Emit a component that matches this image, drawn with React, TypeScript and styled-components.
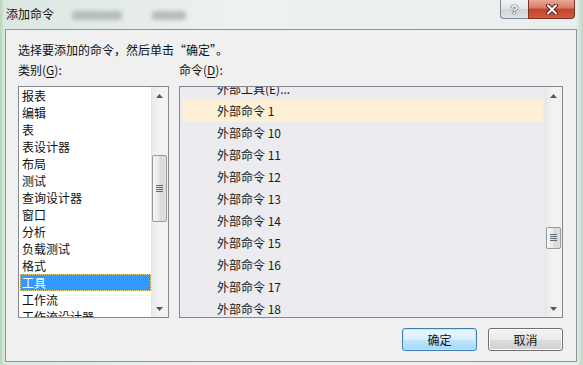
import React from "react";
import styled, { createGlobalStyle } from "styled-components";

const categories = [
  "报表",
  "编辑",
  "表",
  "表设计器",
  "布局",
  "测试",
  "查询设计器",
  "窗口",
  "分析",
  "负载测试",
  "格式",
  "工具",
  "工作流",
  "工作流设计器",
];

const commands = [
  "外部工具(E)...",
  "外部命令 1",
  "外部命令 10",
  "外部命令 11",
  "外部命令 12",
  "外部命令 13",
  "外部命令 14",
  "外部命令 15",
  "外部命令 16",
  "外部命令 17",
  "外部命令 18",
];

const GlobalStyle = createGlobalStyle`
  html, body {
    margin: 0;
    padding: 0;
    background: #e2e9e6;
  }
  body {
    font-family: "Noto Sans CJK SC", "Noto Sans", "Liberation Sans", sans-serif;
    color: #000;
  }
`;

const Window = styled.div`
  width: 583px;
  height: 365px;
  box-sizing: border-box;
  display: flex;
  flex-direction: column;
  padding: 0 6px 3px 5px;
  overflow: hidden;
  background: linear-gradient(
    to right,
    #b3d5ba 0,
    #dbe7e0 4px,
    #eef1f2 40%,
    #e9eeee calc(100% - 7px),
    #bcd8c3 100%
  );
`;

const TitleBar = styled.div`
  height: 29px;
  display: flex;
  align-items: flex-start;
  flex-shrink: 0;
`;

const Title = styled.div`
  padding: 6px 0 0 1px;
  font-size: 12px;
  line-height: 16px;
  color: #111;
`;

// blurred glimpse of the window behind the glass title bar
const Ghost = styled.div<{ $w: number; $ml: number }>`
  width: ${(p) => p.$w}px;
  height: 9px;
  margin: 11px 0 0 ${(p) => p.$ml}px;
  background: #a4acb0;
  border-radius: 3px;
  filter: blur(2px);
  opacity: 0.75;
`;

const HelpButton = styled.div`
  margin-left: auto;
  width: 28px;
  height: 19px;
  box-sizing: border-box;
  border: 1px solid #7b8792;
  border-top: none;
  border-right: none;
  border-radius: 0 0 0 4px;
  background: linear-gradient(
    to bottom,
    #f1f4f6 0,
    #dfe5e9 50%,
    #cbd4da 51%,
    #dbe2e6 100%
  );
  display: flex;
  align-items: center;
  justify-content: center;
  font-family: "Liberation Sans", sans-serif;
  font-weight: bold;
  font-size: 13px;
  color: #fff;
  text-shadow: 0 0 1px #34414c, 0 0 1px #34414c, 0 0 1px #34414c;
`;

const CloseButton = styled.div`
  width: 47px;
  height: 19px;
  margin-right: 2px;
  box-sizing: border-box;
  border: 1px solid #7a3426;
  border-top: none;
  border-radius: 0 0 4px 0;
  background: linear-gradient(
    to bottom,
    #eaa898 0,
    #d87a64 45%,
    #c4432a 50%,
    #d45a3f 100%
  );
  display: flex;
  align-items: center;
  justify-content: center;
`;

const Client = styled.div`
  flex: 1;
  border: 1px solid #8c959a;
  background: #f0f0f0;
  padding: 12px 13px 0 12px;
  display: flex;
  flex-direction: column;
`;

const Text = styled.div`
  font-size: 12px;
  line-height: 16px;
  color: #111;
`;

const Columns = styled.div`
  display: grid;
  grid-template-columns: 151px 1fr;
  column-gap: 10px;
  margin-top: 4px;
`;

const Column = styled.div`
  display: flex;
  flex-direction: column;
`;

const Label = styled(Text)`
  margin-bottom: 8px;
  & u {
    text-decoration: underline;
    text-underline-offset: 2px;
  }
`;

const ListBox = styled.div<{ $bg: string }>`
  height: 232px;
  box-sizing: border-box;
  border: 1px solid #828790;
  background: ${(p) => p.$bg};
  display: flex;
`;

const ListBody = styled.div`
  flex: 1;
  overflow: hidden;
`;

const ListInner = styled.div<{ $offset: number }>`
  margin-top: ${(p) => p.$offset}px;
`;

const CategoryItem = styled.div<{ $selected?: boolean }>`
  height: 17px;
  box-sizing: border-box;
  margin-left: 1px;
  padding-left: 2px;
  font-size: 12px;
  line-height: 17px;
  white-space: nowrap;
  color: ${(p) => (p.$selected ? "#fff" : "#111")};
  background: ${(p) => (p.$selected ? "#3399ff" : "transparent")};
  outline: ${(p) => (p.$selected ? "1px dotted #e6dc8a" : "none")};
  outline-offset: -1px;
`;

const CommandRow = styled.div<{ $hot?: boolean }>`
  height: 22px;
  margin: 0 2px 0 3px;
  padding-left: 34px;
  font-size: 12px;
  line-height: 22px;
  white-space: nowrap;
  color: #1a1a1a;
  background: ${(p) => (p.$hot ? "#fdf0d5" : "transparent")};
`;

const ScrollBar = styled.div`
  width: 17px;
  flex-shrink: 0;
  display: flex;
  flex-direction: column;
  background: linear-gradient(
    to right,
    #e2e2e2 0,
    #ececec 2px,
    #f3f3f3 60%,
    #f1f1f1 100%
  );
`;

const ArrowButton = styled.div`
  height: 17px;
  display: flex;
  align-items: center;
  justify-content: center;
`;

const Track = styled.div`
  flex: 1;
`;

const Thumb = styled.div<{ $top: number; $h: number }>`
  margin: ${(p) => p.$top}px 1px 0 1px;
  height: ${(p) => p.$h}px;
  box-sizing: border-box;
  border: 1px solid #9b9b9b;
  border-radius: 2px;
  background: linear-gradient(
    to right,
    #f5f5f5 0,
    #e9e9e9 45%,
    #d9d9d9 55%,
    #dedede 100%
  );
  display: flex;
  align-items: center;
  justify-content: center;
`;

const ButtonRow = styled.div`
  display: flex;
  justify-content: flex-end;
  gap: 11px;
  margin-top: 10px;
`;

const Button = styled.div<{ $default?: boolean }>`
  width: 75px;
  height: 23px;
  box-sizing: border-box;
  border: 1px solid ${(p) => (p.$default ? "#3c7fb1" : "#707070")};
  border-radius: 3px;
  background: ${(p) =>
    p.$default
      ? "linear-gradient(to bottom, #eaf6fd 0, #d9f0fc 50%, #bee6fd 51%, #a7d9f5 100%)"
      : "linear-gradient(to bottom, #f2f2f2 0, #ebebeb 50%, #dddddd 51%, #cfcfcf 100%)"};
  box-shadow: inset 0 0 0 1px ${(p) => (p.$default ? "#c4e5f6" : "#fcfcfc")};
  display: flex;
  align-items: center;
  justify-content: center;
  font-size: 12px;
  color: #111;
`;

const Arrow = ({ up }: { up?: boolean }) => (
  <svg width="7" height="4" viewBox="0 0 7 4">
    <path d={up ? "M0 4 L3.5 0 L7 4 Z" : "M0 0 L3.5 4 L7 0 Z"} fill="#4d5a66" />
  </svg>
);

const Grip = () => (
  <svg width="7" height="8" viewBox="0 0 7 8">
    {[0, 2, 4, 6].map((y) => (
      <rect key={y} x="0" y={y} width="7" height="1" fill="#5e6a74" />
    ))}
  </svg>
);

const CloseGlyph = () => (
  <svg width="12" height="11" viewBox="0 0 12 11">
    <path d="M2 1.5 L10 9.5 M10 1.5 L2 9.5" stroke="#5a2318" strokeWidth="4" strokeLinecap="round" />
    <path d="M2 1.5 L10 9.5 M10 1.5 L2 9.5" stroke="#fff" strokeWidth="2" strokeLinecap="round" />
  </svg>
);

const Scroller = ({ top, h }: { top: number; h: number }) => (
  <ScrollBar>
    <ArrowButton>
      <Arrow up />
    </ArrowButton>
    <Track>
      <Thumb $top={top} $h={h}>
        <Grip />
      </Thumb>
    </Track>
    <ArrowButton>
      <Arrow />
    </ArrowButton>
  </ScrollBar>
);

const App = () => {
  return (
    <Window>
      <GlobalStyle />
      <TitleBar>
        <Title>添加命令</Title>
        <Ghost $w={50} $ml={18} />
        <Ghost $w={34} $ml={30} />
        <HelpButton>?</HelpButton>
        <CloseButton>
          <CloseGlyph />
        </CloseButton>
      </TitleBar>
      <Client>
        <Text>选择要添加的命令，然后单击“确定”。</Text>
        <Columns>
          <Column>
            <Label>
              类别(<u>G</u>):
            </Label>
            <ListBox $bg="#ffffff">
              <ListBody>
                <ListInner $offset={0}>
                  {categories.map((c) => (
                    <CategoryItem key={c} $selected={c === "工具"}>
                      {c}
                    </CategoryItem>
                  ))}
                </ListInner>
              </ListBody>
              <Scroller top={51} h={67} />
            </ListBox>
          </Column>
          <Column>
            <Label>
              命令(<u>D</u>):
            </Label>
            <ListBox $bg="#ebebf0">
              <ListBody>
                <ListInner $offset={-9}>
                  {commands.map((c) => (
                    <CommandRow key={c} $hot={c === "外部命令 1"}>
                      {c}
                    </CommandRow>
                  ))}
                </ListInner>
              </ListBody>
              <Scroller top={123} h={22} />
            </ListBox>
          </Column>
        </Columns>
        <ButtonRow>
          <Button $default>确定</Button>
          <Button>取消</Button>
        </ButtonRow>
      </Client>
    </Window>
  );
};

export default App;
